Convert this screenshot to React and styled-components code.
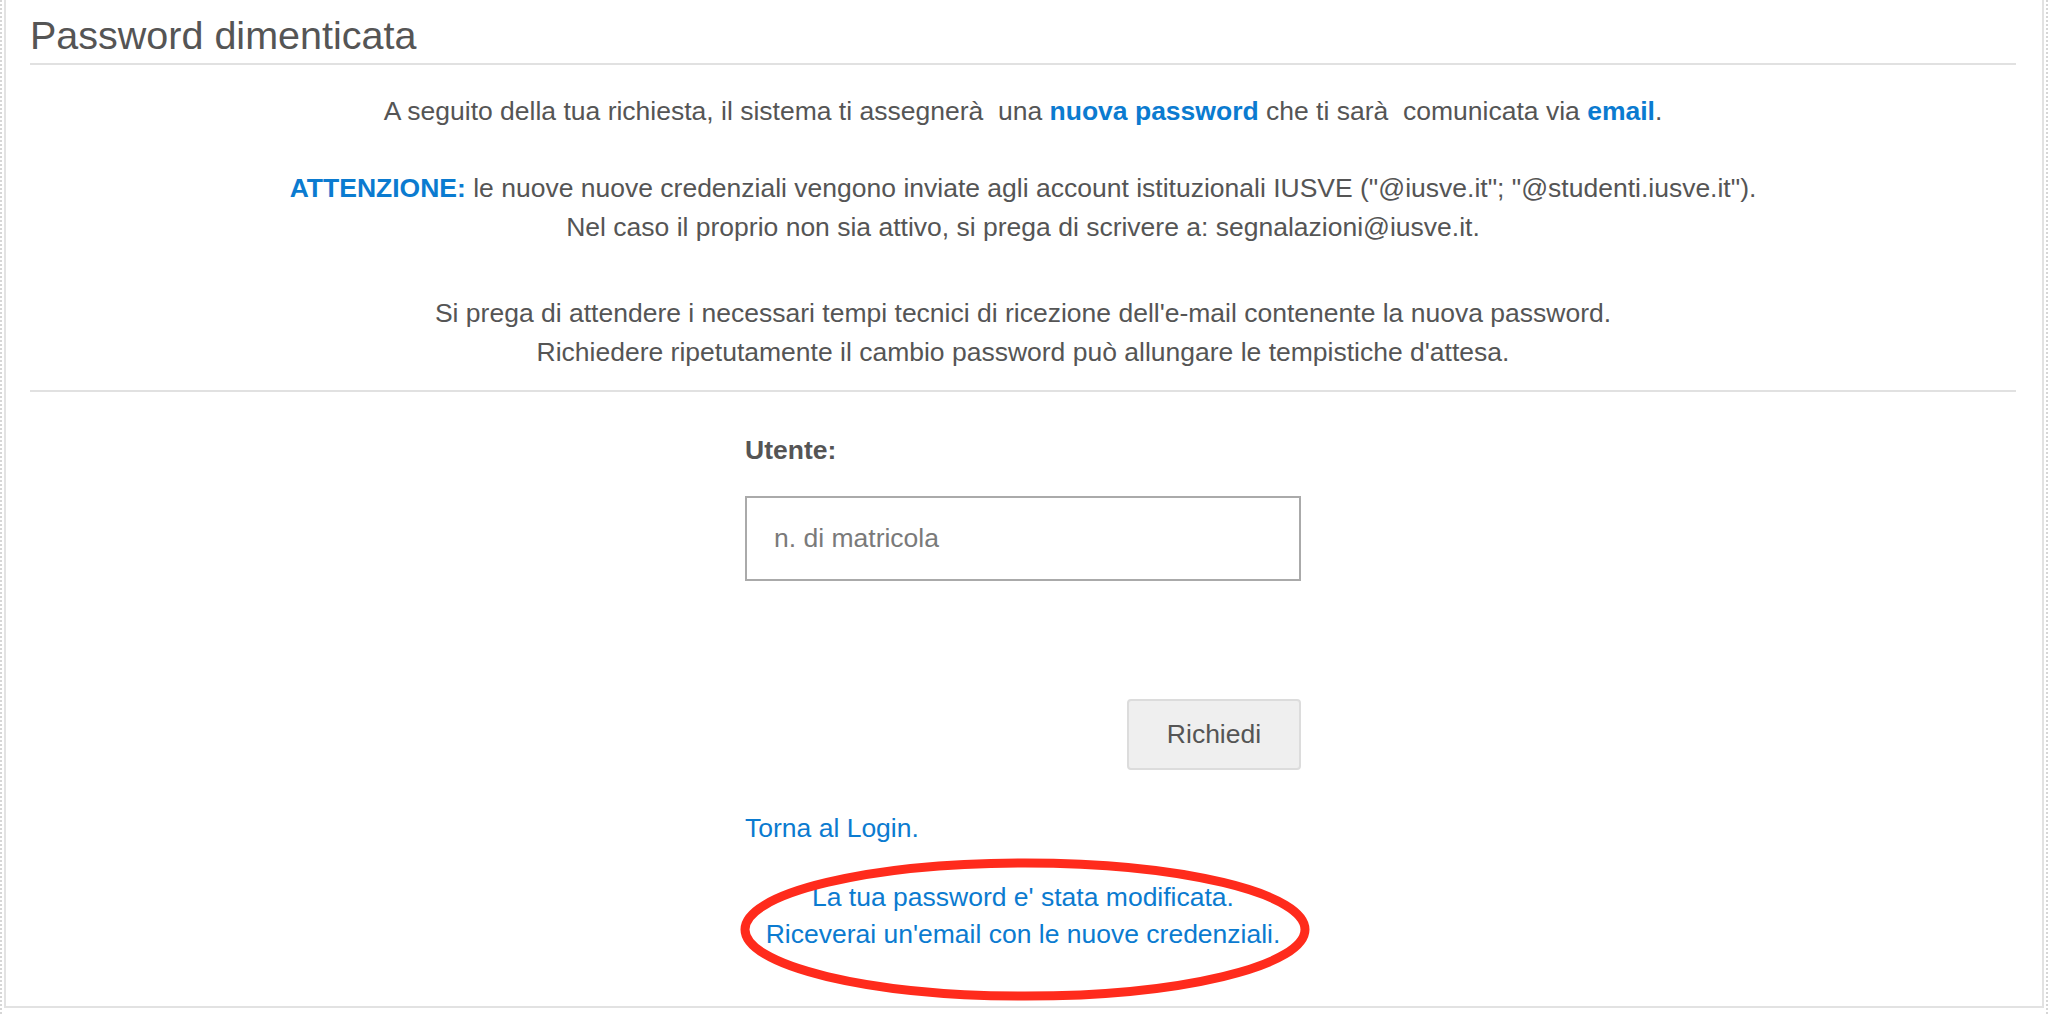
import React from 'react';
import styled, { createGlobalStyle } from 'styled-components';

const GlobalStyle = createGlobalStyle`
  html, body { margin: 0; padding: 0; background: #fff; }
  body {
    font-family: "Liberation Sans", Arial, Helvetica, sans-serif;
    color: #555;
  }
  * { box-sizing: border-box; }
`;

const Frame = styled.div`
  width: 2048px;
  height: 1014px;
  overflow: hidden;
  padding: 0 2px;
  border-left: 2px dotted #d6d6d6;
  border-right: 2px dotted #d6d6d6;
`;

const Card = styled.section`
  height: 1008px;
  background: #fff;
  border: 2px solid #e2e2e2;
  border-top: none;
  padding: 0 26px 0 24px;
`;

const Title = styled.h3`
  margin: 0;
  padding: 13px 0 6px;
  font-size: 39.5px;
  line-height: 44px;
  font-weight: normal;
  color: #555;
  border-bottom: 2px solid #e1e1e1;
`;

const Intro = styled.div`
  padding: 27px 0 18px;
  text-align: center;
  font-size: 26.5px;
  line-height: 39px;
  border-bottom: 2px solid #e1e1e1;
`;

const Para = styled.p`
  margin: 0 0 ${(p) => p.$gap || 0}px;
`;

const Accent = styled.strong`
  color: #0b7bd0;
  font-weight: bold;
`;

const FormCol = styled.form`
  width: 556px;
  margin: 0 auto;
  padding-top: 39px;
  font-size: 26.5px;
  line-height: 39px;
`;

const Label = styled.label`
  display: block;
  font-weight: bold;
  color: #555;
  margin-bottom: 26px;
`;

const Input = styled.input`
  display: block;
  width: 100%;
  height: 85px;
  border: 2px solid #aaa;
  border-radius: 0;
  padding: 0 27px;
  font-family: inherit;
  font-size: 26.5px;
  color: #555;
  background: #fff;
  outline: none;
  &::placeholder { color: #7a7a7a; }
`;

const ButtonRow = styled.div`
  display: flex;
  justify-content: flex-end;
  margin-top: 118px;
`;

const Button = styled.button`
  width: 174px;
  height: 71px;
  background: #efefef;
  border: 2px solid #dcdcdc;
  border-radius: 4px;
  font-family: inherit;
  font-size: 26.5px;
  color: #555;
  cursor: pointer;
`;

const BackLink = styled.a`
  display: block;
  margin-top: 39px;
  color: #0b7bd0;
  text-decoration: none;
`;

const Message = styled.div`
  position: relative;
  margin-top: 31px;
  text-align: center;
  color: #0b7bd0;
  line-height: 37px;
`;

const Circle = styled.svg`
  position: absolute;
  left: -5px;
  top: -21px;
  width: 570px;
  height: 143px;
  overflow: visible;
  pointer-events: none;
`;

export default function App() {
  return (
    <>
      <GlobalStyle />
      <Frame>
        <Card>
          <Title>Password dimenticata</Title>
          <Intro>
            <Para $gap={38}>
              A seguito della tua richiesta, il sistema ti assegnerà{'\u00a0'} una{' '}
              <Accent>nuova password</Accent> che ti sarà{'\u00a0'} comunicata via{' '}
              <Accent>email</Accent>.
            </Para>
            <Para $gap={47}>
              <Accent>ATTENZIONE:</Accent> le nuove nuove credenziali vengono inviate agli account
              istituzionali IUSVE ("@iusve.it"; "@studenti.iusve.it").
              <br />
              Nel caso il proprio non sia attivo, si prega di scrivere a: segnalazioni@iusve.it.
            </Para>
            <Para>
              Si prega di attendere i necessari tempi tecnici di ricezione dell'e-mail contenente la
              nuova password.
              <br />
              Richiedere ripetutamente il cambio password può allungare le tempistiche d'attesa.
            </Para>
          </Intro>
          <FormCol onSubmit={(e) => e.preventDefault()}>
            <Label htmlFor="utente">Utente:</Label>
            <Input id="utente" type="text" placeholder="n. di matricola" />
            <ButtonRow>
              <Button type="submit">Richiedi</Button>
            </ButtonRow>
            <BackLink href="#">Torna al Login.</BackLink>
            <Message>
              La tua password e' stata modificata.
              <br />
              Riceverai un'email con le nuove credenziali.
              <Circle viewBox="0 0 570 143">
                <ellipse
                  cx="285"
                  cy="71.5"
                  rx="280"
                  ry="66.5"
                  fill="none"
                  stroke="#ff2b1c"
                  strokeWidth="9"
                />
              </Circle>
            </Message>
          </FormCol>
        </Card>
      </Frame>
    </>
  );
}
